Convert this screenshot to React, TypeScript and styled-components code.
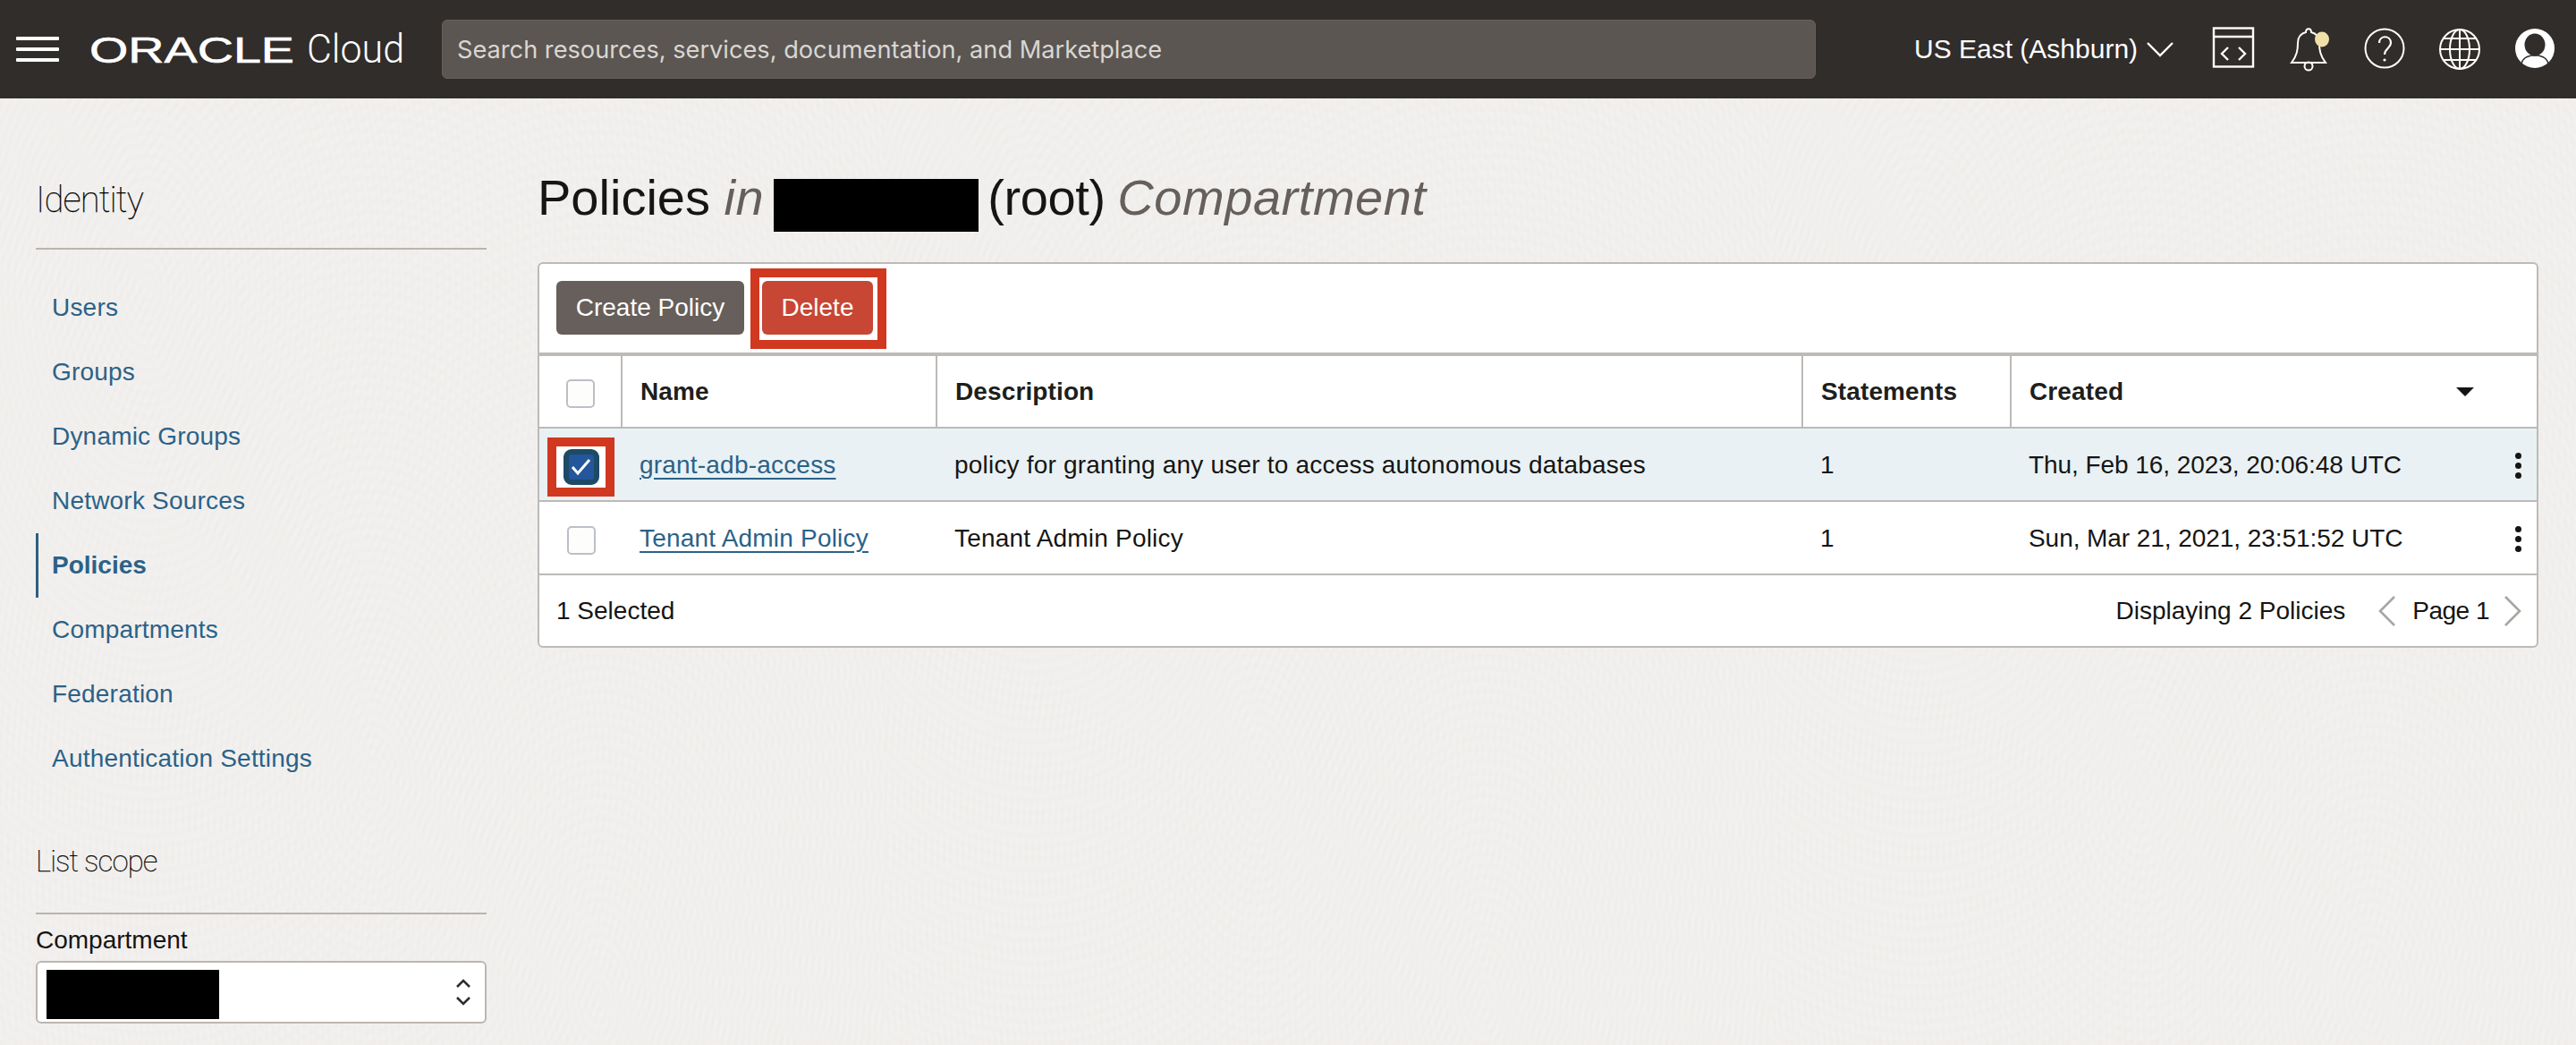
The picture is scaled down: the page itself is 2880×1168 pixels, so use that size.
import React from 'react';
import styled, { createGlobalStyle } from 'styled-components';

const GlobalStyle = createGlobalStyle`
  html, body {
    margin: 0;
    padding: 0;
    background: #f1efed;
    font-family: "Liberation Sans", Arial, sans-serif;
    color: #161513;
  }
`;

const ripple = (x: number, y: number) =>
  `repeating-radial-gradient(ellipse 7px 13px at ${x}px ${y}px, rgba(90, 80, 70, 0.008) 0%, rgba(90, 80, 70, 0.008) 30%, transparent 60%, transparent 100%)`;

const Page = styled.div`
  width: 2880px;
  height: 1168px;
  overflow: hidden;
  display: flex;
  flex-direction: column;
  background-color: #f3f1ef;
  background-image: ${ripple(415, 877)}, ${ripple(670, 1113)}, ${ripple(165, 320)};
  background-size: 990px 1168px;
`;

const TopBar = styled.header`
  height: 110px;
  flex: none;
  background: #312d2a;
  display: flex;
  align-items: center;
  color: #fff;
`;

const MenuButton = styled.div`
  width: 48px;
  height: 28px;
  margin-left: 18px;
  display: flex;
  flex-direction: column;
  justify-content: space-between;
  span {
    height: 4px;
    background: #fff;
    border-radius: 1px;
  }
`;

const Logo = styled.svg`
  width: 355px;
  height: 56px;
  margin-left: 34px;
  flex: none;
  display: block;
`;

const SearchBox = styled.div`
  width: 1536px;
  height: 66px;
  margin-left: 39px;
  box-sizing: border-box;
  padding-left: 16px;
  display: flex;
  align-items: center;
  background: #5b5652;
  border-radius: 6px;
  border: 1px solid #66615c;
  color: #d9d6d3;
  font-family: Inter, "Liberation Sans", sans-serif;
  font-size: 27.2px;
`;

const Region = styled.div`
  margin-left: 110px;
  display: flex;
  align-items: center;
  font-size: 30px;
  white-space: nowrap;
`;

const RegionChevron = styled.svg`
  width: 30px;
  height: 18px;
  margin-left: 10px;
`;

const TopIcon = styled.svg<{ $gap: number }>`
  width: 48px;
  height: 50px;
  margin-left: ${(p) => p.$gap}px;
  flex: none;
  display: block;
`;

const Body = styled.div`
  flex: 1;
  display: flex;
  min-height: 0;
`;

const Sidebar = styled.aside`
  width: 504px;
  margin-left: 40px;
  flex: none;
`;

const SideHeading = styled.h2<{ $top: number; $pad: number; $size: number }>`
  margin: ${(p) => p.$top}px 0 0;
  padding-bottom: ${(p) => p.$pad}px;
  border-bottom: 2px solid #bab4ae;
  font-family: Roboto, "Liberation Sans", sans-serif;
  font-weight: 100;
  font-size: ${(p) => p.$size}px;
  line-height: 46px;
  letter-spacing: -0.9px;
  color: #000;
  -webkit-text-stroke: 0.25px #000;
`;

const NavList = styled.nav`
  margin-top: 29px;
  display: flex;
  flex-direction: column;
`;

const NavItem = styled.a<{ $active?: boolean }>`
  height: 72px;
  display: flex;
  align-items: center;
  box-sizing: border-box;
  padding-left: ${(p) => (p.$active ? 15 : 18)}px;
  border-left: ${(p) => (p.$active ? '3px solid #2c5f83' : 'none')};
  font-size: 28px;
  letter-spacing: ${(p) => (p.$active ? 0 : 0.2)}px;
  font-weight: ${(p) => (p.$active ? 700 : 400)};
  color: #2b6288;
`;

const FieldLabel = styled.div`
  margin-top: 11px;
  font-size: 28px;
  line-height: 36px;
  color: #161513;
`;

const SelectBox = styled.div`
  height: 70px;
  margin-top: 5px;
  box-sizing: border-box;
  padding: 0 16px 0 10px;
  display: flex;
  align-items: center;
  justify-content: space-between;
  background: #fff;
  border: 2px solid #bcb6b0;
  border-radius: 6px;
`;

const Redacted = styled.span<{ $w: number; $h: number }>`
  display: inline-block;
  width: ${(p) => p.$w}px;
  height: ${(p) => p.$h}px;
  background: #000;
`;

const SelectRedacted = styled(Redacted)`
  margin-top: 5px;
`;

const TitleRedacted = styled(Redacted)`
  vertical-align: -19px;
  margin-left: -5px;
`;

const Main = styled.main`
  width: 2237px;
  margin-left: 57px;
  flex: none;
`;

const Title = styled.h1`
  margin: 78px 0 0;
  height: 66px;
  font-size: 56px;
  line-height: 66px;
  font-weight: 400;
  white-space: nowrap;
  color: #161513;
  em {
    color: #665f5b;
    letter-spacing: 0.55px;
  }
`;

const TitleRoot = styled.span`
  letter-spacing: -0.4px;
  margin: 0 -2px 0 -5px;
`;

const Card = styled.section`
  margin-top: 39px;
  height: 431px;
  box-sizing: border-box;
  background: #fff;
  border: 2px solid #bdbab7;
  border-radius: 6px;
  display: flex;
  flex-direction: column;
`;

const Toolbar = styled.div`
  height: 103px;
  flex: none;
  box-sizing: border-box;
  padding: 5px 0 0 19px;
  display: flex;
  align-items: flex-start;
  border-bottom: 4px solid #bdbab7;
`;

const Button = styled.button<{ $danger?: boolean }>`
  height: 60px;
  padding: 0;
  width: ${(p) => (p.$danger ? 124 : 210)}px;
  margin-top: ${(p) => (p.$danger ? 0 : 14)}px;
  border: none;
  border-radius: 6px;
  background: ${(p) => (p.$danger ? '#c74634' : '#665f5b')};
  color: #fff;
  font-family: inherit;
  font-size: 28px;
`;

const DeleteHighlight = styled.div`
  margin-left: 7px;
  width: 152px;
  height: 90px;
  box-sizing: border-box;
  border: 10px solid #d0381f;
  padding: 4px 0 0 3px;
`;

const Table = styled.table`
  width: 100%;
  table-layout: fixed;
  border-collapse: collapse;
`;

const HeadCell = styled.th<{ $w?: number }>`
  height: 80px;
  width: ${(p) => (p.$w ? `${p.$w}px` : 'auto')};
  box-sizing: border-box;
  padding: 0 20px;
  text-align: left;
  font-size: 28px;
  letter-spacing: 0.12px;
  font-weight: 700;
  color: #201e1c;
  border-left: 2px solid #bdbab7;
  border-bottom: 2px solid #bdbab7;
  &:first-child {
    border-left: none;
    padding: 0;
  }
`;

const HeadInner = styled.div`
  display: flex;
  align-items: center;
  justify-content: space-between;
  padding-right: 50px;
`;

const SortMark = styled.span`
  width: 0;
  height: 0;
  border-left: 10px solid transparent;
  border-right: 10px solid transparent;
  border-top: 10px solid #161513;
`;

const Row = styled.tr<{ $selected?: boolean }>`
  background: ${(p) => (p.$selected ? '#e9f1f4' : 'transparent')};
`;

const Cell = styled.td`
  height: 82px;
  box-sizing: border-box;
  padding: 2px 20px 0;
  font-size: 28px;
  letter-spacing: 0.2px;
  color: #161513;
  border-bottom: 2px solid #bdbab7;
  white-space: nowrap;
  &:first-child {
    padding: 0;
  }
`;

const CreatedCell = styled.div`
  display: flex;
  align-items: center;
  justify-content: space-between;
  letter-spacing: -0.06px;
`;

const CheckCell = styled.div`
  display: flex;
  align-items: center;
  justify-content: center;
  padding: 5px 0 0 1px;
`;

const CheckBox = styled.span`
  width: 32px;
  height: 32px;
  box-sizing: border-box;
  border: 2px solid #bbc0c7;
  border-radius: 5px;
  background: #fdfdfc;
`;

const CheckHighlight = styled.div`
  width: 75px;
  height: 66px;
  box-sizing: border-box;
  border: 10px solid #d0381f;
  background: #fff;
  display: flex;
  align-items: center;
  justify-content: center;
`;

const CheckedBox = styled.span`
  width: 40px;
  height: 40px;
  box-sizing: border-box;
  border: 6px solid #1d4a66;
  border-radius: 9px;
  background: #24569b;
  display: flex;
  align-items: center;
  justify-content: center;
`;

const PolicyLink = styled.a`
  color: #2b6288;
  text-decoration: underline;
  text-underline-offset: 5px;
`;

const Kebab = styled.span`
  width: 7px;
  margin-right: -3px;
  display: flex;
  flex-direction: column;
  gap: 4px;
  i {
    width: 7px;
    height: 7px;
    border-radius: 50%;
    background: #161513;
  }
`;

const Footer = styled.div`
  flex: 1;
  padding: 0 17px 0 19px;
  display: flex;
  align-items: center;
  justify-content: space-between;
  font-size: 28px;
  color: #161513;
`;

const Pager = styled.div`
  display: flex;
  align-items: center;
`;

const PagerArrow = styled.svg<{ $gap: number }>`
  width: 20px;
  height: 34px;
  margin-left: ${(p) => p.$gap}px;
`;

const PageLabel = styled.span`
  margin-left: 18px;
  letter-spacing: -0.5px;
`;

const policies = [
  {
    name: 'grant-adb-access',
    description: 'policy for granting any user to access autonomous databases',
    statements: 1,
    created: 'Thu, Feb 16, 2023, 20:06:48 UTC',
    selected: true,
  },
  {
    name: 'Tenant Admin Policy',
    description: 'Tenant Admin Policy',
    statements: 1,
    created: 'Sun, Mar 21, 2021, 23:51:52 UTC',
    selected: false,
  },
];

const navItems = [
  'Users',
  'Groups',
  'Dynamic Groups',
  'Network Sources',
  'Policies',
  'Compartments',
  'Federation',
  'Authentication Settings',
];

export default function App() {
  return (
    <Page>
      <GlobalStyle />
      <TopBar>
        <MenuButton>
          <span />
          <span />
          <span />
        </MenuButton>
        <Logo viewBox="0 0 355 56">
          <text x="0" y="43" fill="#fff" fontFamily="Liberation Sans" fontSize="41" textLength="229" lengthAdjust="spacingAndGlyphs" stroke="#fff" strokeWidth="0.6">
            ORACLE
          </text>
          <text x="243" y="43" fill="#fff" fontFamily="Roboto" fontWeight="300" fontSize="44" textLength="109" lengthAdjust="spacingAndGlyphs">
            Cloud
          </text>
        </Logo>
        <SearchBox>Search resources, services, documentation, and Marketplace</SearchBox>
        <Region>
          US East (Ashburn)
          <RegionChevron viewBox="0 0 30 18" fill="none" stroke="#fff" strokeWidth="2.4">
            <path d="M1 2 L15 16 L29 2" />
          </RegionChevron>
        </Region>
        <TopIcon $gap={43} viewBox="0 0 48 50" fill="none" stroke="#fff" strokeWidth="2.4">
          <rect x="2" y="1.5" width="44" height="43" />
          <path d="M2 11 H46" />
          <path d="M18 23 L11 30 L18 37 M30 23 L37 30 L30 37" />
        </TopIcon>
        <TopIcon $gap={38} viewBox="0 0 48 50" fill="none" stroke="#fff" strokeWidth="2">
          <path d="M3 40 C9 32 10 26 10 18 C10 10 15 7 19 6 C19 1 25 1 25 6 C29 7 34 10 34 18 C34 26 35 32 41 40 Z" />
          <circle cx="22" cy="44" r="4.5" />
          <ellipse cx="37" cy="14" rx="8" ry="8.5" fill="#f0dfa8" stroke="none" />
        </TopIcon>
        <TopIcon $gap={35} viewBox="0 0 48 50" fill="none" stroke="#fff" strokeWidth="2">
          <circle cx="24" cy="24" r="21.5" />
          <path d="M18 18 C18 9 31 9 31 18 C31 24 24 24 24 31" strokeWidth="2.2" />
          <circle cx="24" cy="37" r="1.6" fill="#fff" stroke="none" />
        </TopIcon>
        <TopIcon $gap={36} viewBox="0 0 48 50" fill="none" stroke="#fff" strokeWidth="2">
          <circle cx="24" cy="25" r="22" />
          <ellipse cx="24" cy="25" rx="11" ry="22" />
          <path d="M24 3 V47 M2 25 H46 M6 13 H42 M6 37 H42" />
        </TopIcon>
        <TopIcon $gap={36} viewBox="0 0 48 50">
          <ellipse cx="24" cy="24" rx="22" ry="22" fill="#fff" />
          <ellipse cx="24" cy="20" rx="11.5" ry="12.5" fill="#312d2a" />
          <path d="M9 41 C11 33 17 33 20 32 L28 32 C31 33 37 33 39 41" fill="none" stroke="#312d2a" strokeWidth="1.6" />
        </TopIcon>
      </TopBar>
      <Body>
        <Sidebar>
          <SideHeading $top={91} $pad={30} $size={40}>
            Identity
          </SideHeading>
          <NavList>
            {navItems.map((item) => (
              <NavItem key={item} $active={item === 'Policies'}>
                {item}
              </NavItem>
            ))}
          </NavList>
          <SideHeading $top={56} $pad={34} $size={33}>
            List scope
          </SideHeading>
          <FieldLabel>Compartment</FieldLabel>
          <SelectBox>
            <SelectRedacted $w={193} $h={55} />
            <svg width="16" height="32" viewBox="0 0 16 32" fill="none" stroke="#312d2a" strokeWidth="2.6">
              <path d="M1 10 L8 3 L15 10 M1 22 L8 29 L15 22" />
            </svg>
          </SelectBox>
        </Sidebar>
        <Main>
          <Title>
            Policies <em>in</em> <TitleRedacted $w={229} $h={59} /> <TitleRoot>(root)</TitleRoot> <em>Compartment</em>
          </Title>
          <Card>
            <Toolbar>
              <Button>Create Policy</Button>
              <DeleteHighlight>
                <Button $danger>Delete</Button>
              </DeleteHighlight>
            </Toolbar>
            <Table>
              <thead>
                <tr>
                  <HeadCell $w={92}>
                    <CheckCell>
                      <CheckBox />
                    </CheckCell>
                  </HeadCell>
                  <HeadCell $w={352}>Name</HeadCell>
                  <HeadCell $w={968}>Description</HeadCell>
                  <HeadCell $w={233}>Statements</HeadCell>
                  <HeadCell>
                    <HeadInner>
                      Created
                      <SortMark />
                    </HeadInner>
                  </HeadCell>
                </tr>
              </thead>
              <tbody>
                {policies.map((policy) => (
                  <Row key={policy.name} $selected={policy.selected}>
                    <Cell>
                      <CheckCell>
                        {policy.selected ? (
                          <CheckHighlight>
                            <CheckedBox>
                              <svg width="23" height="20" viewBox="0 0 23 20" fill="none" stroke="#fff" strokeWidth="3">
                                <path d="M2 10 L8 17 L21 2" />
                              </svg>
                            </CheckedBox>
                          </CheckHighlight>
                        ) : (
                          <CheckBox />
                        )}
                      </CheckCell>
                    </Cell>
                    <Cell>
                      <PolicyLink>{policy.name}</PolicyLink>
                    </Cell>
                    <Cell>{policy.description}</Cell>
                    <Cell>{policy.statements}</Cell>
                    <Cell>
                      <CreatedCell>
                        {policy.created}
                        <Kebab>
                          <i />
                          <i />
                          <i />
                        </Kebab>
                      </CreatedCell>
                    </Cell>
                  </Row>
                ))}
              </tbody>
            </Table>
            <Footer>
              <span>1 Selected</span>
              <Pager>
                <span>Displaying 2 Policies</span>
                <PagerArrow $gap={37} viewBox="0 0 20 34" fill="none" stroke="#a9a5a1" strokeWidth="2.6">
                  <path d="M18 1 L2 17 L18 33" />
                </PagerArrow>
                <PageLabel>Page 1</PageLabel>
                <PagerArrow $gap={16} viewBox="0 0 20 34" fill="none" stroke="#a9a5a1" strokeWidth="2.6">
                  <path d="M2 1 L18 17 L2 33" />
                </PagerArrow>
              </Pager>
            </Footer>
          </Card>
        </Main>
      </Body>
    </Page>
  );
}
